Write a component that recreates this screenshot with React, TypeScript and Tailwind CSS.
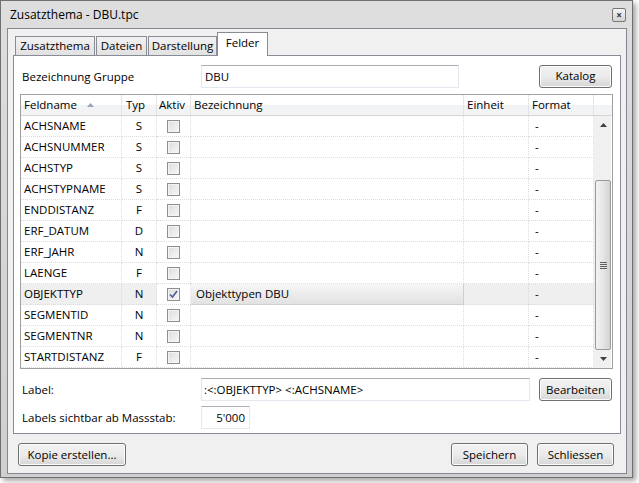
import React from 'react';

const rows: [string, string][] = [
  ['ACHSNAME', 'S'],
  ['ACHSNUMMER', 'S'],
  ['ACHSTYP', 'S'],
  ['ACHSTYPNAME', 'S'],
  ['ENDDISTANZ', 'F'],
  ['ERF_DATUM', 'D'],
  ['ERF_JAHR', 'N'],
  ['LAENGE', 'F'],
  ['OBJEKTTYP', 'N'],
  ['SEGMENTID', 'N'],
  ['SEGMENTNR', 'N'],
  ['STARTDISTANZ', 'F'],
];

const cols = 'grid grid-cols-[101px_35px_34px_273px_65px_65px]';

function Button({ children, className = '' }: { children: React.ReactNode; className?: string }) {
  return (
    <button
      className={`h-[23px] rounded-[3px] border border-[#707070] bg-gradient-to-b from-[#f2f2f2] via-[#ebebeb] to-[#d6d6d6] text-[11.5px] text-black shadow-[inset_0_0_0_1px_#fcfcfc] ${className}`}
    >
      {children}
    </button>
  );
}

function Checkbox({ checked }: { checked?: boolean }) {
  return (
    <div className="flex h-[13px] w-[13px] items-center justify-center border border-[#8e8f8f] bg-gradient-to-br from-[#dcdcdc] to-[#f8f8f8] shadow-[inset_0_0_0_1px_#f4f4f4]">
      {checked && (
        <svg width="9" height="9" viewBox="0 0 9 9">
          <path d="M1 4.5 L3.5 7 L8 1" fill="none" stroke="#4a5f97" strokeWidth="1.6" />
        </svg>
      )}
    </div>
  );
}

function Scrollbar() {
  return (
    <div className="flex w-[17px] flex-col bg-[#f0f0f0] pl-px">
      <div className="flex h-[17px] items-center justify-center">
        <svg width="7" height="4" viewBox="0 0 7 4">
          <path d="M0 4 L3.5 0 L7 4 Z" fill="#404040" />
        </svg>
      </div>
      <div className="h-[47px]" />
      <div className="flex h-[170px] items-center justify-center rounded-[2px] border border-[#9a9a9a] bg-gradient-to-r from-[#f2f2f2] via-[#e6e6e6] to-[#d2d2d2]">
        <div className="flex flex-col gap-px">
          <div className="h-px w-[7px] bg-[#606060]" />
          <div className="h-px w-[7px] bg-[#606060]" />
          <div className="h-px w-[7px] bg-[#606060]" />
          <div className="h-px w-[7px] bg-[#606060]" />
        </div>
      </div>
      <div className="flex flex-1 items-center justify-center">
        <svg width="7" height="4" viewBox="0 0 7 4">
          <path d="M0 0 L7 0 L3.5 4 Z" fill="#404040" />
        </svg>
      </div>
    </div>
  );
}

export default function App() {
  return (
    <div className="h-[483px] w-[639px] bg-white font-['Open_Sans',sans-serif] text-[11.5px] text-black">
      <div className="flex h-[478px] w-[633px] flex-col border border-[#707070] bg-gradient-to-b from-[#dedede] to-[#cfcfcf] shadow-[3px_3px_5px_rgba(0,0,0,0.35)]">
        {/* Title bar */}
        <div className="flex h-[27px] items-center justify-between pl-[9px] pr-[6px]">
          <span className="text-[12px]">Zusatzthema - DBU.tpc</span>
          <div className="flex h-[14px] w-[14px] items-center justify-center rounded-[2px] border border-[#777] bg-gradient-to-b from-[#f4f4f4] to-[#d4d4d4] text-[10px] font-bold leading-none text-[#333]">
            ×
          </div>
        </div>

        {/* Client area */}
        <div className="mb-[3px] ml-[6px] mr-[5px] flex flex-1 flex-col border border-[#828790] bg-[#f0f0f0] pl-[5px] pr-[2px]">
          {/* Tabs */}
          <div className="mt-[3px] flex h-[23px] items-end pl-[2px]">
            <div className="flex h-[19px] w-[80px] items-center justify-center border border-b-0 border-[#898c95] bg-gradient-to-b from-[#f2f2f2] to-[#e1e1e1]">Zusatzthema</div>
            <div className="ml-px flex h-[19px] w-[51px] items-center justify-center border border-b-0 border-[#898c95] bg-gradient-to-b from-[#f2f2f2] to-[#e1e1e1]">Dateien</div>
            <div className="ml-px flex h-[19px] w-[69px] items-center justify-center border border-b-0 border-[#898c95] bg-gradient-to-b from-[#f2f2f2] to-[#e1e1e1]">Darstellung</div>
            <div className="relative -mb-px flex h-[24px] w-[51px] items-start justify-center border border-b-0 border-[#898c95] bg-white pt-[1px]">Felder</div>
          </div>

          {/* Panel */}
          <div className="flex w-[608px] flex-col border border-[#898c95] bg-white pb-[4px] pl-[6px] pr-[7px] pt-[9px]">
            <div className="flex h-[23px] items-center">
              <span className="w-[181px] pl-[2px]">Bezeichnung Gruppe</span>
              <div className="flex h-[23px] w-[258px] items-center border border-[#e3e9ef] border-t-[#abadb3] px-[3px]">DBU</div>
              <Button className="ml-[80px] mt-[-1px] w-[73px]">Katalog</Button>
            </div>

            {/* Table */}
            <div className="mt-[6px] flex flex-col border border-[#a0a0a0]">
              <div className="flex h-[21px] border-b border-[#d5d5d5] bg-gradient-to-b from-white from-50% to-[#f2f3f4] to-50%">
                <div className={`${cols}`}>
                  <div className="flex items-center border-r border-[#e5e5e5] pl-[3px]">
                    Feldname
                    <svg className="ml-[10px]" width="7" height="4" viewBox="0 0 7 4">
                      <path d="M0 4 L3.5 0 L7 4 Z" fill="#97a5bd" />
                    </svg>
                  </div>
                  <div className="flex items-center border-r border-[#e5e5e5] pl-[4px]">Typ</div>
                  <div className="flex items-center border-r border-[#e5e5e5] pl-[2px]">Aktiv</div>
                  <div className="flex items-center border-r border-[#e5e5e5] pl-[3px]">Bezeichnung</div>
                  <div className="flex items-center border-r border-[#e5e5e5] pl-[3px]">Einheit</div>
                  <div className="flex items-center border-r border-[#e5e5e5] pl-[3px]">Format</div>
                </div>
                <div className="flex-1" />
              </div>
              <div className="flex">
                <div className="flex flex-col">
                  {rows.map(([name, typ]) => {
                    const sel = name === 'OBJEKTTYP';
                    const cell = `flex h-[21px] items-center border-b border-r border-dotted border-[#dcdcdc] ${sel ? 'bg-[#efefef]' : ''}`;
                    return (
                      <div key={name} className={cols}>
                        <div className={`${cell} pl-[3px]`}>{name}</div>
                        <div className={`${cell} justify-center`}>{typ}</div>
                        <div className={`flex h-[21px] items-center justify-center border-b border-r border-dotted border-[#dcdcdc]`}>
                          <Checkbox checked={sel} />
                        </div>
                        {sel ? (
                          <div className="flex h-[21px] items-center border-b border-r border-[#d0d0d0] bg-gradient-to-b from-[#f6f6f6] to-[#e2e2e2] pl-[5px]">
                            Objekttypen DBU
                          </div>
                        ) : (
                          <div className={cell} />
                        )}
                        <div className={cell} />
                        <div className={`${cell} pl-[6px]`}>-</div>
                      </div>
                    );
                  })}
                </div>
                <Scrollbar />
              </div>
            </div>

            <div className="mt-[9px] flex h-[23px] items-center">
              <span className="w-[181px] pl-[2px]">Label:</span>
              <div className="flex h-[23px] w-[329px] items-center border border-[#e3e9ef] border-t-[#abadb3] px-[2px]">
                {':<:OBJEKTTYP> <:ACHSNAME>'}
              </div>
              <Button className="ml-[9px] w-[73px]">Bearbeiten</Button>
            </div>
            <div className="mt-[5px] flex h-[23px] items-center">
              <span className="w-[181px] pl-[2px]">Labels sichtbar ab Massstab:</span>
              <div className="flex h-[23px] w-[49px] items-center justify-end border border-[#e3e9ef] border-t-[#abadb3] px-[4px]">
                5'000
              </div>
            </div>
          </div>

          {/* Footer */}
          <div className="mt-[9px] flex items-center">
            <Button className="ml-[5px] w-[108px]">Kopie erstellen...</Button>
            <div className="flex-1" />
            <Button className="w-[77px]">Speichern</Button>
            <Button className="ml-[9px] mr-[10px] w-[77px]">Schliessen</Button>
          </div>
        </div>
      </div>
    </div>
  );
}
